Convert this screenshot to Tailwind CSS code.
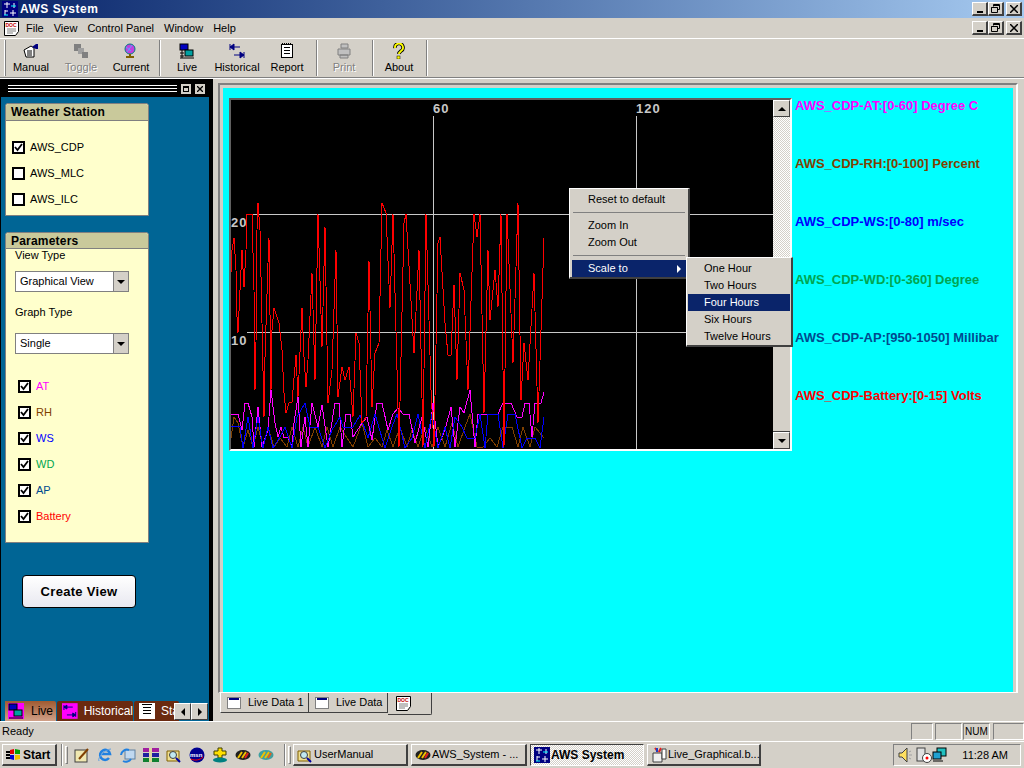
<!DOCTYPE html>
<html lang="en">

<head>
    <meta charset="UTF-8" />
    <title>AWS System</title>
    <script src="https://cdn.jsdelivr.net/npm/@tailwindcss/browser@4"></script>
</head>

<body class="w-[1024px] h-[768px] overflow-hidden bg-[#d4d0c8] text-black text-[11px] leading-none font-['Liberation_Sans',sans-serif] flex flex-col">

    <!-- Title bar -->
    <div class="h-[18px] shrink-0 flex items-center justify-between bg-gradient-to-r from-[#0a246a] to-[#a6caf0]">
        <div class="flex items-center gap-[2px] pl-[2px]">
            <svg width="16" height="16" viewBox="0 0 16 16"><rect width="16" height="16" fill="#000080"/><path d="M5 1v6M2 3h6M11 9v6M8 12h6M3 9v5M3 10h3M12 2v5" stroke="#fff" fill="none"/><path d="M2 14h4M9 5h5" stroke="#0ff"/></svg>
            <span class="text-white font-bold text-[12px] tracking-[0.5px]">AWS System</span>
        </div>
        <div class="flex pr-[2px]">
            <div class="w-[16px] h-[14px] bg-[#d4d0c8] border-t border-l border-white border-r-2 border-b-2 border-r-[#404040] border-b-[#404040] flex items-end justify-center pb-[1px]"><div class="w-[6px] h-[2px] bg-black"></div></div>
            <div class="w-[16px] h-[14px] bg-[#d4d0c8] border-t border-l border-white border-r-2 border-b-2 border-r-[#404040] border-b-[#404040] flex items-center justify-center"><svg width="9" height="9" viewBox="0 0 9 9"><path d="M2.500 2.500V.5h6v5h-2M.5 3.500h6v5h-6zM.5 3.500h6M2.500 1.500h6" stroke="#000" fill="none"/></svg></div>
            <div class="w-[16px] h-[14px] ml-[2px] bg-[#d4d0c8] border-t border-l border-white border-r-2 border-b-2 border-r-[#404040] border-b-[#404040] flex items-center justify-center"><svg width="8" height="8" viewBox="0 0 8 8"><path d="M0 0l8 8M8 0l-8 8" stroke="#000" stroke-width="1.500"/></svg></div>
        </div>
    </div>

    <!-- Menu bar -->
    <div class="h-[21px] shrink-0 flex items-center justify-between border-b border-white">
        <div class="flex items-center">
            <svg class="ml-[4px]" width="15" height="15" viewBox="0 0 15 15"><path d="M.5.5h14v10l-3 4h-11z" fill="#fff" stroke="#000"/><text x="1.500" y="5.500" font-size="5" font-weight="bold" fill="#c00000" font-family="Liberation Sans, sans-serif">DOC</text><path d="M3 8h9M3 10h9M3 12h6" stroke="#808080"/></svg>
            <div class="flex ml-[7px] gap-[10px]"><span>File</span><span>View</span><span>Control Panel</span><span>Window</span><span>Help</span></div>
        </div>
        <div class="flex pr-[2px]">
            <div class="w-[16px] h-[14px] bg-[#d4d0c8] border-t border-l border-white border-r-2 border-b-2 border-r-[#404040] border-b-[#404040] flex items-end justify-center pb-[1px]"><div class="w-[6px] h-[2px] bg-black"></div></div>
            <div class="w-[16px] h-[14px] bg-[#d4d0c8] border-t border-l border-white border-r-2 border-b-2 border-r-[#404040] border-b-[#404040] flex items-center justify-center"><svg width="9" height="9" viewBox="0 0 9 9"><path d="M2.500 2.500V.5h6v5h-2M.5 3.500h6v5h-6zM.5 3.500h6M2.500 1.500h6" stroke="#000" fill="none"/></svg></div>
            <div class="w-[16px] h-[14px] ml-[2px] bg-[#d4d0c8] border-t border-l border-white border-r-2 border-b-2 border-r-[#404040] border-b-[#404040] flex items-center justify-center"><svg width="8" height="8" viewBox="0 0 8 8"><path d="M0 0l8 8M8 0l-8 8" stroke="#000" stroke-width="1.500"/></svg></div>
        </div>
    </div>

    <!-- Toolbar -->
    <div class="h-[39px] shrink-0 flex items-center border-b border-[#808080] pl-[4px]">
        <div class="w-[2px] h-[36px] border-l border-white border-r border-r-[#808080]"></div>
        <div class="flex flex-col items-center w-[50px] gap-[3px]">
            <svg width="16" height="16" viewBox="0 0 16 16"><path d="M1 7l7-4 3 2v9H3z" fill="#fff" stroke="#000"/><path d="M4 8h5M4 10h5M4 12h5" stroke="#000"/><path d="M9 4l4-3v5z" fill="#000080"/><path d="M13 1h2v5h-2z" fill="#000080"/></svg>
            <span>Manual</span>
        </div>
        <div class="flex flex-col items-center w-[50px] gap-[3px] text-[#808080] [text-shadow:1px_1px_0_#fff]">
            <svg width="16" height="16" viewBox="0 0 16 16"><rect x="1" y="1" width="7" height="7" fill="#808080"/><rect x="5" y="5" width="6" height="6" fill="#a0a0a0"/><rect x="9" y="9" width="6" height="6" fill="#808080"/></svg>
            <span>Toggle</span>
        </div>
        <div class="flex flex-col items-center w-[50px] gap-[3px]">
            <svg width="16" height="16" viewBox="0 0 16 16"><circle cx="7" cy="6" r="5" fill="#c040e0" stroke="#008080"/><path d="M3 4l5 4M9 2L4 9" stroke="#60a0ff"/><path d="M7 11v2M3 14h8" stroke="#806000" stroke-width="2"/></svg>
            <span>Current</span>
        </div>
        <div class="w-[2px] h-[36px] ml-[3px] mr-[1px] border-l border-[#808080] border-r border-r-white"></div>
        <div class="flex flex-col items-center w-[50px] gap-[3px]">
            <svg width="16" height="16" viewBox="0 0 16 16"><rect x="1" y="1" width="8" height="6" fill="#0000c0" stroke="#000"/><rect x="6" y="7" width="8" height="6" fill="#00a0a0" stroke="#000"/><path d="M1 10h4M1 13h4M3 7v8M1 15h14" stroke="#000"/></svg>
            <span>Live</span>
        </div>
        <div class="flex flex-col items-center w-[50px] gap-[3px]">
            <svg width="16" height="16" viewBox="0 0 16 16"><path d="M1 1v6M1 4h10M1 4l4-3v6zM15 9v6M5 12h10M15 12l-4-3v6z" stroke="#000080" fill="#000080"/></svg>
            <span>Historical</span>
        </div>
        <div class="flex flex-col items-center w-[50px] gap-[3px]">
            <svg width="16" height="16" viewBox="0 0 16 16"><rect x="2.500" y="1.500" width="11" height="13" fill="#fff" stroke="#000"/><path d="M5 4.500h6M5 7.500h6M5 10.500h6" stroke="#000"/><path d="M3 .5h10" stroke="#000" stroke-dasharray="1 1"/></svg>
            <span>Report</span>
        </div>
        <div class="w-[2px] h-[36px] ml-[4px] border-l border-[#808080] border-r border-r-white"></div>
        <div class="flex flex-col items-center w-[52px] gap-[3px] text-[#808080] [text-shadow:1px_1px_0_#fff]">
            <svg width="16" height="16" viewBox="0 0 16 16"><path d="M5 1h7v4H5zM2 6h12v6H2zM4 12h8v3H4z" fill="#c0c0c0" stroke="#808080"/></svg>
            <span>Print</span>
        </div>
        <div class="w-[2px] h-[36px] ml-[2px] border-l border-[#808080] border-r border-r-white"></div>
        <div class="flex flex-col items-center w-[50px] gap-[3px]">
            <svg width="16" height="16" viewBox="0 0 16 16"><path d="M4 5a4 4 0 1 1 6 3l-2 2v1" fill="none" stroke="#000" stroke-width="3.500"/><path d="M4 5a4 4 0 1 1 6 3l-2 2v1" fill="none" stroke="#ff0" stroke-width="1.800"/><rect x="6" y="13" width="3" height="3" fill="#ff0" stroke="#000" stroke-width=".5"/></svg>
            <span>About</span>
        </div>
        <div class="w-[2px] h-[36px] ml-[2px] border-l border-[#808080] border-r border-r-white"></div>
    </div>

    <!-- Main area -->
    <div class="h-[643px] shrink-0 flex border-t border-white">
        <!-- Left dock -->
        <div class="w-[213px] shrink-0 flex flex-col bg-black pl-[1px] pr-[4px]">
            <div class="h-[18px] shrink-0 flex items-center gap-[4px] pl-[7px] pt-[1px]">
                <div class="w-[169px] h-[7px] border-y border-white"><div class="h-[1px] bg-white mt-[2px]"></div></div>
                <div class="w-[10px] h-[10px] bg-[#d4d0c8] flex items-center justify-center"><div class="w-[6px] h-[6px] border border-black border-t-2"></div></div>
                <div class="w-[10px] h-[10px] bg-[#d4d0c8] flex items-center justify-center"><svg width="6" height="6" viewBox="0 0 6 6"><path d="M0 0l6 6M6 0l-6 6" stroke="#000" stroke-width="1.300"/></svg></div>
            </div>
            <div class="flex-1 bg-[#006595] pl-[4px] flex flex-col min-h-0">
                <!-- Weather Station -->
                <div class="w-[144px] mt-[6px] h-[113px] shrink-0 flex flex-col border border-[#808080] rounded-t-[3px] bg-[#ffffcc]">
                    <div class="h-[17px] bg-[#c9c99b] border-b border-[#808080] rounded-t-[3px] flex items-center pl-[5px] font-bold text-[12px] tracking-[0.2px]">Weather Station</div>
                    <div class="flex flex-col gap-[12px] pl-[6px] pt-[19px]">
                        <label class="flex items-center gap-[5px] h-[14px]"><span class="w-[13px] h-[13px] border-2 border-black bg-white flex items-center justify-center"><svg width="9" height="9" viewBox="0 0 9 9"><path d="M1 4l2.500 3L8 1" fill="none" stroke="#000" stroke-width="1.800"/></svg></span>AWS_CDP</label>
                        <label class="flex items-center gap-[5px] h-[14px]"><span class="w-[13px] h-[13px] border-2 border-black bg-white"></span>AWS_MLC</label>
                        <label class="flex items-center gap-[5px] h-[14px]"><span class="w-[13px] h-[13px] border-2 border-black bg-white"></span>AWS_ILC</label>
                    </div>
                </div>
                <!-- Parameters -->
                <div class="w-[144px] mt-[16px] h-[311px] shrink-0 flex flex-col border border-[#808080] rounded-t-[3px] bg-[#ffffcc]">
                    <div class="h-[16px] bg-[#c9c99b] border-b border-[#808080] rounded-t-[3px] flex items-center pl-[5px] font-bold text-[12px] tracking-[0.2px]">Parameters</div>
                    <div class="pl-[9px] pt-[1px]">View Type</div>
                    <div class="ml-[9px] mt-[10px] w-[114px] h-[21px] border border-[#808080] bg-white flex items-center justify-between">
                        <span class="pl-[4px]">Graphical View</span>
                        <span class="w-[15px] h-full bg-[#d4d0c8] border-l border-[#808080] flex items-center justify-center"><span class="w-0 h-0 border-x-[4px] border-x-transparent border-t-[4px] border-t-black"></span></span>
                    </div>
                    <div class="pl-[9px] mt-[15px]">Graph Type</div>
                    <div class="ml-[9px] mt-[15px] w-[114px] h-[21px] border border-[#808080] bg-white flex items-center justify-between">
                        <span class="pl-[4px]">Single</span>
                        <span class="w-[15px] h-full bg-[#d4d0c8] border-l border-[#808080] flex items-center justify-center"><span class="w-0 h-0 border-x-[4px] border-x-transparent border-t-[4px] border-t-black"></span></span>
                    </div>
                    <div class="flex flex-col gap-[13px] pl-[12px] pt-[26px]">
                        <label class="flex items-center gap-[5px] h-[13px] text-[#ff00ff]"><span class="w-[13px] h-[13px] border-2 border-black bg-white flex items-center justify-center"><svg width="9" height="9" viewBox="0 0 9 9"><path d="M1 4l2.500 3L8 1" fill="none" stroke="#000" stroke-width="1.800"/></svg></span>AT</label>
                        <label class="flex items-center gap-[5px] h-[13px] text-[#804000]"><span class="w-[13px] h-[13px] border-2 border-black bg-white flex items-center justify-center"><svg width="9" height="9" viewBox="0 0 9 9"><path d="M1 4l2.500 3L8 1" fill="none" stroke="#000" stroke-width="1.800"/></svg></span>RH</label>
                        <label class="flex items-center gap-[5px] h-[13px] text-[#0000ff]"><span class="w-[13px] h-[13px] border-2 border-black bg-white flex items-center justify-center"><svg width="9" height="9" viewBox="0 0 9 9"><path d="M1 4l2.500 3L8 1" fill="none" stroke="#000" stroke-width="1.800"/></svg></span>WS</label>
                        <label class="flex items-center gap-[5px] h-[13px] text-[#00a651]"><span class="w-[13px] h-[13px] border-2 border-black bg-white flex items-center justify-center"><svg width="9" height="9" viewBox="0 0 9 9"><path d="M1 4l2.500 3L8 1" fill="none" stroke="#000" stroke-width="1.800"/></svg></span>WD</label>
                        <label class="flex items-center gap-[5px] h-[13px] text-[#004a8f]"><span class="w-[13px] h-[13px] border-2 border-black bg-white flex items-center justify-center"><svg width="9" height="9" viewBox="0 0 9 9"><path d="M1 4l2.500 3L8 1" fill="none" stroke="#000" stroke-width="1.800"/></svg></span>AP</label>
                        <label class="flex items-center gap-[5px] h-[13px] text-[#ff0000]"><span class="w-[13px] h-[13px] border-2 border-black bg-white flex items-center justify-center"><svg width="9" height="9" viewBox="0 0 9 9"><path d="M1 4l2.500 3L8 1" fill="none" stroke="#000" stroke-width="1.800"/></svg></span>Battery</label>
                    </div>
                </div>
                <!-- Create View -->
                <button class="w-[114px] h-[33px] shrink-0 ml-[17px] mt-[32px] rounded-[4px] border border-black bg-gradient-to-b from-white to-[#e8e8f0] font-bold text-[13px] tracking-[0.3px]">Create View</button>
                <!-- Dock tabs -->
                <div class="mt-auto h-[20px] shrink-0 flex items-end relative overflow-hidden text-[12px]">
                    <div class="h-[20px] w-[53px] -ml-[2px] shrink-0 bg-gradient-to-b from-[#a05a30] to-[#d0a088] rounded-t-[2px] flex items-center gap-[7px] pl-[5px]">
                        <svg width="16" height="16" viewBox="0 0 16 16"><rect width="16" height="16" fill="#ff00ff"/><rect x="1" y="1" width="8" height="6" fill="#0000c0" stroke="#000"/><rect x="6" y="7" width="8" height="6" fill="#00a0a0" stroke="#000"/><path d="M1 15h14" stroke="#000"/></svg>
                        <span>Live</span>
                    </div>
                    <div class="h-[20px] w-[76px] shrink-0 bg-[#6b2a10] rounded-t-[2px] ml-[1px] flex items-center gap-[6px] pl-[5px] text-white">
                        <svg width="16" height="16" viewBox="0 0 16 16"><rect width="16" height="16" fill="#ff00ff"/><path d="M2 2v5M2 4h9M2 4l3-2v4zM14 9v5M5 12h9M14 12l-3-2v4z" stroke="#000080" fill="#000080"/></svg>
                        <span>Historical</span>
                    </div>
                    <div class="h-[20px] w-[45px] shrink-0 bg-[#6b2a10] rounded-t-[2px] ml-[1px] flex items-center gap-[6px] pl-[5px] text-white">
                        <svg class="shrink-0" width="16" height="16" viewBox="0 0 16 16"><rect width="16" height="16" fill="#fff"/><path d="M3 1.500h10M4 4.500h8M4 7.500h8M4 10.500h8" stroke="#000"/></svg>
                        <span>Sta</span>
                    </div>
                    <div class="absolute right-[1px] bottom-[1px] flex">
                        <div class="w-[17px] h-[17px] bg-[#d4d0c8] border-t border-l border-white border-r border-b border-r-[#404040] border-b-[#404040] flex items-center justify-center"><span class="w-0 h-0 border-y-[4px] border-y-transparent border-r-[4px] border-r-black"></span></div>
                        <div class="w-[17px] h-[17px] bg-[#d4d0c8] border-t border-l border-white border-r border-b border-r-[#404040] border-b-[#404040] flex items-center justify-center"><span class="w-0 h-0 border-y-[4px] border-y-transparent border-l-[4px] border-l-black"></span></div>
                    </div>
                </div>
            </div>
        </div>

        <!-- MDI area -->
        <div class="flex-1 flex flex-col pl-[5px] pr-[6px] pt-[4px] min-w-0">
            <div class="flex-1 min-h-0 border-t-2 border-l-2 border-[#808080] border-r-2 border-r-white border-b border-b-white pt-[3px] pl-[3px] pr-[3px]">
                <div class="h-full bg-[#00ffff] relative pl-[6px] pt-[10px] flex">
                    <!-- Chart -->
                    <div class="w-[563px] h-[353px] shrink-0 border-t-2 border-l-2 border-[#606060] border-b-2 border-b-white border-r-2 border-r-white flex">
                        <div class="flex-1 bg-black">
                            <svg id="chart" class="block" width="542" height="349" viewBox="231 100 542 349"></svg>
                        </div>
                        <div class="w-[17px] flex flex-col bg-[repeating-conic-gradient(#d4d0c8_0_25%,#fff_0_50%)] bg-[length:2px_2px]">
                            <div class="w-[17px] h-[17px] bg-[#d4d0c8] border-t border-l border-white border-r border-b border-r-[#404040] border-b-[#404040] flex items-center justify-center"><span class="w-0 h-0 border-x-[4px] border-x-transparent border-b-[4px] border-b-black"></span></div>
                            <div class="flex-1"></div>
                            <div class="h-[150px] bg-[#d4d0c8] border-b border-[#404040]"></div>
                            <div class="w-[17px] h-[17px] bg-[#d4d0c8] border-t border-l border-white border-r border-b border-r-[#404040] border-b-[#404040] flex items-center justify-center"><span class="w-0 h-0 border-x-[4px] border-x-transparent border-t-[4px] border-t-black"></span></div>
                        </div>
                    </div>
                    <!-- Legend -->
                    <div class="pl-[3px] pt-[1px] flex flex-col gap-[44px] font-bold text-[13px] leading-[14px] whitespace-nowrap">
                        <div class="text-[#ff00ff]">AWS_CDP-AT:[0-60] Degree C</div>
                        <div class="text-[#804000]">AWS_CDP-RH:[0-100] Percent</div>
                        <div class="text-[#0000ff]">AWS_CDP-WS:[0-80] m/sec</div>
                        <div class="text-[#00a651]">AWS_CDP-WD:[0-360] Degree</div>
                        <div class="text-[#004a8f]">AWS_CDP-AP:[950-1050] Millibar</div>
                        <div class="text-[#ff0000]">AWS_CDP-Battery:[0-15] Volts</div>
                    </div>
                    <!-- Context menu -->
                    <div class="absolute left-[346px] top-[100px] w-[121px] h-[91px] bg-[#d4d0c8] border-t border-l border-white border-r-2 border-b-2 border-r-[#404040] border-b-[#404040] px-[2px] pt-[2px] z-10">
                        <div class="h-[17px] flex items-center pl-[16px]">Reset to default</div>
                        <div class="h-[9px] flex items-center px-[1px]"><div class="w-full h-[1px] bg-[#808080]"></div></div>
                        <div class="h-[17px] flex items-center pl-[16px]">Zoom In</div>
                        <div class="h-[17px] flex items-center pl-[16px]">Zoom Out</div>
                        <div class="h-[9px] flex items-center px-[1px]"><div class="w-full h-[1px] bg-[#808080]"></div></div>
                        <div class="h-[17px] flex items-center justify-between pl-[16px] pr-[5px] bg-[#0a246a] text-white">Scale to<span class="w-0 h-0 border-y-[4px] border-y-transparent border-l-[4px] border-l-white"></span></div>
                    </div>
                    <!-- Submenu -->
                    <div class="absolute left-[463px] top-[169px] w-[107px] h-[90px] bg-[#d4d0c8] border-t border-l border-white border-r-2 border-b-2 border-r-[#404040] border-b-[#404040] px-[1px] pt-[2px] z-20">
                        <div class="h-[17px] flex items-center pl-[16px]">One Hour</div>
                        <div class="h-[17px] flex items-center pl-[16px]">Two Hours</div>
                        <div class="h-[17px] flex items-center pl-[16px] bg-[#0a246a] text-white">Four Hours</div>
                        <div class="h-[17px] flex items-center pl-[16px]">Six Hours</div>
                        <div class="h-[17px] flex items-center pl-[16px]">Twelve Hours</div>
                    </div>
                </div>
            </div>
            <!-- MDI tabs -->
            <div class="h-[28px] shrink-0 flex items-start pl-[2px]">
                <div class="h-[20px] w-[89px] border-l border-white border-r border-b border-r-[#404040] border-b-[#404040] flex items-center gap-[7px] pl-[6px]">
                    <div class="w-[14px] h-[12px] border border-[#808080] bg-white"><div class="h-[2px] bg-[#000080] m-[1px] mt-[0px]"></div></div>Live Data 1
                </div>
                <div class="h-[20px] w-[79px] border-r border-b border-r-[#404040] border-b-[#404040] flex items-center gap-[7px] pl-[6px]">
                    <div class="w-[14px] h-[12px] border border-[#808080] bg-white"><div class="h-[2px] bg-[#000080] m-[1px] mt-[0px]"></div></div>Live Data
                </div>
                <div class="h-[22px] w-[44px] border-r border-b border-r-[#404040] border-b-[#404040] flex items-center pl-[8px] rounded-br-[2px]">
                    <svg width="15" height="15" viewBox="0 0 15 15"><path d="M.5.5h14v10l-3 4h-11z" fill="#fff" stroke="#000"/><text x="1.500" y="5.500" font-size="5" font-weight="bold" fill="#c00000" font-family="Liberation Sans, sans-serif">DOC</text><path d="M3 8h9M3 10h9M3 12h6" stroke="#808080"/></svg>
                </div>
            </div>
        </div>
    </div>

    <!-- Status bar -->
    <div class="h-[20px] shrink-0 flex items-center justify-between border-t border-white">
        <span class="pl-[2px]">Ready</span>
        <div class="flex self-end pb-[1px]">
            <div class="w-[22px] h-[17px] border border-[#808080] border-r-white border-b-white"></div>
            <div class="w-[27px] h-[17px] ml-[2px] border border-[#808080] border-r-white border-b-white"></div>
            <div class="w-[27px] h-[17px] ml-[1px] border border-[#808080] border-r-white border-b-white flex items-center pl-[1px] text-[10px]">NUM</div>
            <div class="w-[31px] h-[17px] ml-[3px] border border-[#808080] border-r-white border-b-white"></div>
        </div>
    </div>

    <!-- Taskbar -->
    <div class="flex-1 flex items-center border-t border-white pl-[2px] gap-[2px]">
        <button class="w-[55px] h-[22px] shrink-0 border-t border-l border-white border-r-2 border-b-2 border-r-[#404040] border-b-[#404040] flex items-center gap-[1px] pl-[3px] font-bold text-[12px]">
            <svg class="shrink-0" width="16" height="14" viewBox="0 0 16 14"><path d="M0 3h4v2H0zM0 6h4v2H0zM0 9h4v2H0z" fill="#000"/><path d="M4 2l4-1v5H4z" fill="#e00000"/><path d="M9 1l5 1v4H9z" fill="#00a000"/><path d="M4 7h4v5l-4-1z" fill="#0000d0"/><path d="M9 7h5v4l-5 1z" fill="#f0c000"/></svg>Start
        </button>
        <div class="w-[2px] h-[22px] ml-[2px] shrink-0 border-l border-[#808080] border-r border-r-white"></div>
        <div class="w-[3px] h-[18px] shrink-0 border-t border-l border-white border-r border-b border-r-[#808080] border-b-[#808080]"></div>
        <div class="flex items-center gap-[7px] pl-[4px] w-[212px] shrink-0">
            <svg width="16" height="16" viewBox="0 0 16 16"><rect x="1" y="3" width="12" height="12" fill="#f0e8b0" stroke="#404040"/><path d="M5 12L14 2" stroke="#804000" stroke-width="2"/></svg>
            <svg width="16" height="16" viewBox="0 0 16 16"><path d="M12 11a5 5 0 1 1 1-4H5" fill="none" stroke="#2080e0" stroke-width="2.500"/><path d="M2 14C0 11 8 2 14 2" fill="none" stroke="#60a0e0"/></svg>
            <svg width="16" height="16" viewBox="0 0 16 16"><rect x="5" y="3" width="10" height="9" fill="#c0d8f0" stroke="#6080a0"/><path d="M1 8a6 6 0 0 1 8-5M3 14a6 6 0 0 0 8-2" fill="none" stroke="#2080e0" stroke-width="2"/></svg>
            <svg width="16" height="16" viewBox="0 0 16 16"><rect y="1" width="16" height="4" fill="#a020a0"/><rect y="6" width="16" height="4" fill="#2020a0"/><rect y="11" width="16" height="4" fill="#108030"/><rect x="6" y="1" width="3" height="14" fill="#e0d8a0"/></svg>
            <svg width="16" height="16" viewBox="0 0 16 16"><path d="M1 4h12v10H1z" fill="#f0e090" stroke="#806000"/><circle cx="7" cy="8" r="3.500" fill="#c0e8f0" stroke="#404040"/><path d="M10 11l4 4" stroke="#0000a0" stroke-width="2"/></svg>
            <svg width="16" height="16" viewBox="0 0 16 16"><circle cx="8" cy="8" r="7.500" fill="#000090"/><path d="M2 12c4 2 9 1 12-2" stroke="#f00" fill="none"/><text x="1" y="10" font-size="6" fill="#fff" font-weight="bold">msn</text></svg>
            <svg width="16" height="16" viewBox="0 0 16 16"><path d="M6 1h4v3h4v4h-4v3H6V8H2V4h4z" fill="#ffe000" stroke="#404000"/><ellipse cx="8" cy="13" rx="7" ry="2.500" fill="#008080"/></svg>
            <svg width="16" height="12" viewBox="0 0 16 12"><ellipse cx="8" cy="6" rx="7.500" ry="5" fill="#202020"/><path d="M3 9l4-6M7 9l4-6" stroke="#f0c000" stroke-width="2"/><path d="M10 9l3-5" stroke="#e02020" stroke-width="2"/></svg>
            <svg width="16" height="12" viewBox="0 0 16 12"><ellipse cx="8" cy="6" rx="7.500" ry="5" fill="#40a0a0"/><path d="M3 9l4-6M7 9l4-6" stroke="#f0c000" stroke-width="2"/><path d="M10 9l3-5" stroke="#e06020" stroke-width="2"/></svg>
        </div>
        <div class="w-[2px] h-[22px] shrink-0 border-l border-[#808080] border-r border-r-white"></div>
        <div class="w-[3px] h-[18px] shrink-0 border-t border-l border-white border-r border-b border-r-[#808080] border-b-[#808080]"></div>
        <div class="flex gap-[3px]">
            <div class="w-[115px] h-[22px] border-t border-l border-white border-r-2 border-b-2 border-r-[#404040] border-b-[#404040] flex items-center gap-[1px] pl-[3px] whitespace-nowrap">
                <svg class="shrink-0" width="16" height="16" viewBox="0 0 16 16"><path d="M1 4h12v10H1z" fill="#f0e090" stroke="#806000"/><circle cx="7" cy="8" r="3.500" fill="#c0e8f0" stroke="#404040"/><path d="M10 11l4 4" stroke="#0000a0" stroke-width="2"/></svg>UserManual
            </div>
            <div class="w-[116px] h-[22px] border-t border-l border-white border-r-2 border-b-2 border-r-[#404040] border-b-[#404040] flex items-center gap-[1px] pl-[3px] whitespace-nowrap">
                <svg class="shrink-0" width="16" height="12" viewBox="0 0 16 12"><ellipse cx="8" cy="6" rx="7.500" ry="5" fill="#202020"/><path d="M3 9l4-6M7 9l4-6" stroke="#f0c000" stroke-width="2"/><path d="M10 9l3-5" stroke="#e02020" stroke-width="2"/></svg>AWS_System - ...
            </div>
            <div class="w-[114px] h-[22px] border-t border-l border-[#404040] border-r border-b border-r-white border-b-white flex items-center gap-[1px] pl-[3px] font-bold text-[12px] bg-[repeating-conic-gradient(#d4d0c8_0_25%,#fff_0_50%)] bg-[length:2px_2px] whitespace-nowrap">
                <svg class="shrink-0" width="16" height="16" viewBox="0 0 16 16"><rect width="16" height="16" fill="#000080"/><path d="M5 1v6M2 3h6M11 9v6M8 12h6M3 9v5M3 10h3M12 2v5" stroke="#fff" fill="none"/><path d="M2 14h4M9 5h5" stroke="#0ff"/></svg>AWS System
            </div>
            <div class="w-[114px] h-[22px] border-t border-l border-white border-r-2 border-b-2 border-r-[#404040] border-b-[#404040] flex items-center gap-[1px] pl-[3px] whitespace-nowrap">
                <svg class="shrink-0" width="16" height="16" viewBox="0 0 16 16"><path d="M2 6h9v9H2z" fill="#f0f0f0" stroke="#404040"/><path d="M7 5L4 1M8 5l2-4" stroke="#e02020" stroke-width="2"/><path d="M6 5V1" stroke="#2040c0" stroke-width="2"/><path d="M11 2h4v10h-4z" fill="#fff" stroke="#404040"/></svg>Live_Graphical.b...
            </div>
        </div>
        <div class="ml-auto mr-[3px] w-[128px] h-[22px] border-t border-l border-[#808080] border-r border-b border-r-white border-b-white flex items-center pl-[4px]">
            <svg width="16" height="16" viewBox="0 0 16 16"><path d="M1 6h3l5-5v14l-5-5H1z" fill="#ffe060" stroke="#404040"/><path d="M11 5l2-1M11 8h3M11 11l2 1" stroke="#a0a0a0"/></svg>
            <svg class="ml-[2px]" width="16" height="16" viewBox="0 0 16 16"><rect x="1" y="1" width="8" height="13" fill="#e0e0e0" stroke="#404040"/><circle cx="11" cy="11" r="4.500" fill="#fff" stroke="#404040"/><circle cx="11" cy="11" r="1.500" fill="#f00"/></svg>
            <svg width="16" height="16" viewBox="0 0 16 16"><rect x="5" y="1" width="9" height="8" fill="#20c0c0" stroke="#000"/><rect x="1" y="5" width="8" height="7" fill="#20a0d0" stroke="#000"/><path d="M1 14h10" stroke="#000"/></svg>
            <span class="ml-auto mr-[12px]">11:28 AM</span>
        </div>
    </div>

    <script>
        // chart lines, traced from the 3x crop (x 225+, y 190+)
        const red = [18,250,22,180,28,145,32,240,36,380,38,428,44,300,50,180,56,290,62,180,66,73,80,73,86,300,90,600,92,460,96,120,100,38,106,120,110,400,116,680,120,500,128,220,132,145,138,600,142,420,148,355,162,400,170,480,178,610,182,670,192,638,200,635,212,495,218,620,230,355,236,500,242,590,250,510,262,250,270,570,280,73,290,470,300,110,310,640,322,540,332,180,340,620,352,530,360,570,372,530,384,680,392,428,402,460,412,700,424,680,432,213,440,650,450,490,462,460,472,38,484,70,494,355,505,73,522,770,536,100,544,73,566,490,582,180,594,770,604,73,618,600,628,770,640,160,646,140,660,400,670,495,678,495,686,285,696,570,706,250,716,300,728,600,748,73,756,140,765,73,778,670,788,180,796,390,810,240,818,350,828,73,838,770,846,73,864,520,878,38,888,630,898,460,910,570,928,250,940,700,958,145];
        const magenta = [18,673,38,673,50,720,60,638,70,638,80,680,88,770,100,650,110,770,128,720,138,600,150,700,158,740,168,710,178,745,190,740,200,770,208,700,218,620,228,770,240,680,250,770,262,640,280,710,292,645,310,770,330,638,342,638,350,770,362,673,374,673,385,740,410,700,425,680,440,750,455,638,472,638,490,720,505,673,520,655,535,673,552,673,570,760,590,680,610,770,625,640,640,770,660,720,678,650,690,770,706,650,716,670,736,600,750,770,758,673,820,673,835,638,858,638,875,680,890,680,900,638,912,638,922,740,930,638,948,638,958,605];
        const brown = [18,745,28,680,40,700,55,770,70,720,85,770,100,710,115,770,130,710,148,770,165,745,185,770,200,710,218,770,235,710,250,770,270,710,290,770,305,710,325,770,345,710,365,745,385,770,410,700,430,770,450,745,470,770,485,720,505,770,525,710,545,770,560,720,580,770,600,710,620,770,640,710,660,770,680,700,700,770,720,710,736,673,755,770,775,770,795,745,815,770,835,710,860,710,880,770,895,710,915,770,930,710,958,745];
        const blue = [18,708,45,712,55,775,70,680,85,775,98,680,115,775,130,710,145,775,165,740,180,710,200,775,215,680,240,640,255,710,280,710,300,775,320,720,345,680,355,710,385,710,405,675,430,745,450,673,480,775,500,710,515,673,540,775,560,745,580,673,600,775,620,673,640,775,660,710,675,775,690,680,710,710,725,745,750,745,765,673,780,775,790,673,820,673,835,775,850,673,870,673,890,775,905,745,930,745,945,775,958,680];

        function trace(pts, color) {
            let s = '';
            for (let i = 0; i < pts.length; i += 2) {
                s += Math.round(225 + pts[i] / 3) + ',' + Math.round(190 + pts[i + 1] / 3) + ' ';
            }
            return `<polyline points="${s}" fill="none" stroke="${color}" stroke-width="1" shape-rendering="crispEdges"/>`;
        }

        document.getElementById('chart').innerHTML =
            // grid
            '<path d="M433.5 116V449M636.5 116V449M247 214.5H773M247 332.5H773" stroke="#c8c8c8" fill="none"/>' +
            trace(brown, '#804000') + trace(magenta, '#ff00ff') + trace(blue, '#0000ff') + trace(red, '#ff0000') +
            '<g fill="#c8c8c8" font-size="13" font-weight="bold" letter-spacing="1" font-family="Liberation Sans, sans-serif">' +
            '<text x="433" y="113">60</text><text x="636" y="113">120</text>' +
            '<text x="231" y="227">20</text><text x="231" y="345">10</text></g>';
    </script>

</body>

</html>
